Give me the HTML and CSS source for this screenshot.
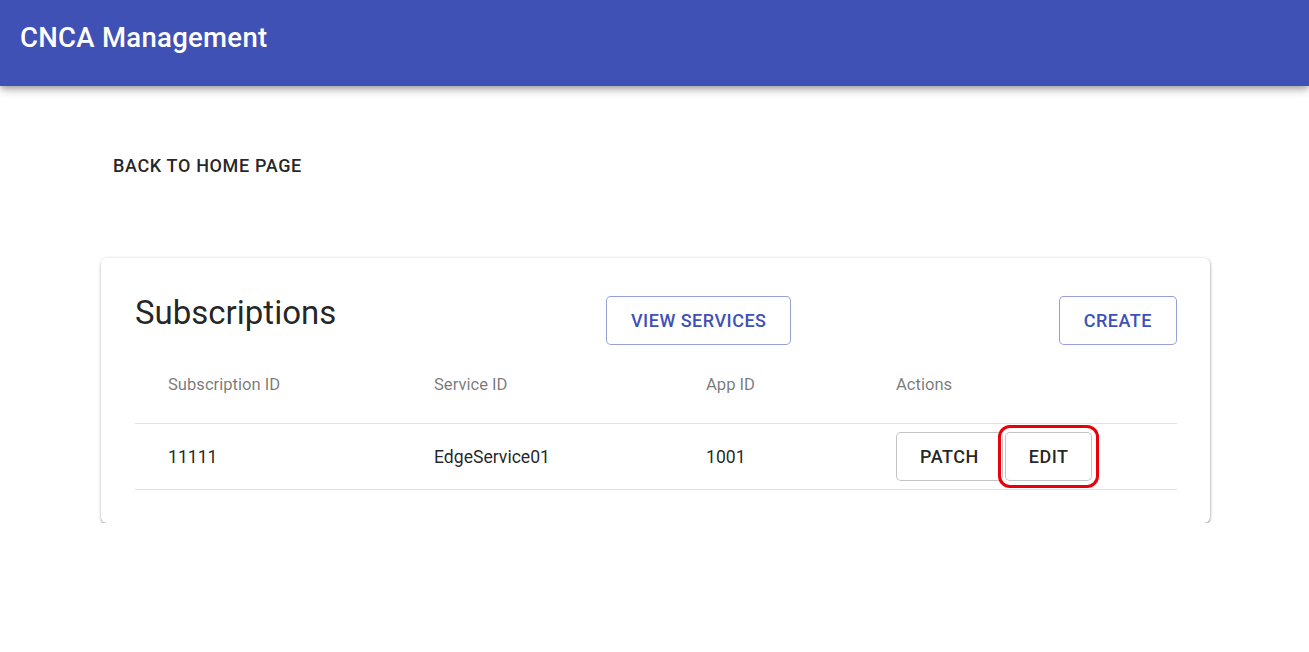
FILE: index.html
```html
<!DOCTYPE html>
<html>
<head>
<meta charset="utf-8">
<link rel="stylesheet" href="styles.css">
</head>
<body>
<header class="appbar">
  <h1 class="app-title">CNCA Management</h1>
</header>
<main class="content">
  <div class="back-row">
    <button class="text-btn">BACK TO HOME PAGE</button>
  </div>
  <section class="card">
    <div class="card-head">
      <h2 class="card-title">Subscriptions</h2>
      <button class="btn btn-primary">VIEW SERVICES</button>
      <div class="spacer"></div>
      <button class="btn btn-primary">CREATE</button>
    </div>
    <div class="table">
      <div class="row row-head">
        <div class="cell">Subscription ID</div>
        <div class="cell">Service ID</div>
        <div class="cell">App ID</div>
        <div class="cell">Actions</div>
      </div>
      <div class="row row-body">
        <div class="cell">11111</div>
        <div class="cell">EdgeService01</div>
        <div class="cell">1001</div>
        <div class="cell actions">
          <button class="btn btn-default">PATCH</button>
          <button class="btn btn-default highlighted">EDIT</button>
        </div>
      </div>
    </div>
  </section>
</main>
</body>
</html>
```

FILE: styles.css
```css
* { box-sizing: border-box; }
html, body { margin: 0; padding: 0; background: #fff; }
body { font-family: Roboto, "Liberation Sans", Arial, sans-serif; color: rgba(0,0,0,0.87); }

.appbar {
  height: 86px;
  background: #3f51b5;
  box-shadow: 0 3px 5px -1px rgba(0,0,0,0.2), 0 5px 8px 0 rgba(0,0,0,0.14), 0 1px 12px 0 rgba(0,0,0,0.12);
  display: flex;
  align-items: flex-start;
  padding: 21px 0 0 20px;
  position: relative;
}
.app-title {
  margin: 0;
  color: #fff;
  font-size: 27.5px;
  font-weight: 500;
  line-height: 34px;
  letter-spacing: 0.3px;
}

.content {
  padding: 0 99px 0 101px;
}
.back-row {
  padding-top: 59px;
  height: 172px;
}
.text-btn {
  font-family: inherit;
  background: none;
  border: 0;
  padding: 6px 12px;
  font-size: 18px;
  font-weight: 500;
  letter-spacing: 0.65px;
  color: rgba(0,0,0,0.87);
  line-height: 30px;
  cursor: pointer;
}

.card {
  background: #fff;
  border-radius: 6px;
  box-shadow: 0 2px 2px 0 rgba(0,0,0,0.22), 0 1px 4px 0 rgba(0,0,0,0.14), 1px 0 2px 0 rgba(0,0,0,0.1);
  padding: 38px 33px 33px 34px;
}
.card-head {
  display: flex;
  align-items: flex-start;
}
.card-title {
  margin: 0;
  flex: 0 0 471px;
  font-size: 33px;
  font-weight: 400;
  line-height: 34px;
  color: rgba(0,0,0,0.87);
}
.spacer { flex: 1; }

.btn {
  font-family: inherit;
  height: 49px;
  padding: 0 24px;
  font-size: 18px;
  font-weight: 500;
  letter-spacing: 0.5px;
  border-radius: 5px;
  background: #fff;
  cursor: pointer;
}
.btn-primary {
  color: #3f51b5;
  border: 1px solid rgba(63,81,181,0.55);
}
.btn-default {
  color: rgba(0,0,0,0.87);
  border: 1px solid rgba(0,0,0,0.23);
  height: 49px;
  padding: 0 23px;
}

.row {
  display: grid;
  grid-template-columns: 266px 272px 190px 1fr;
  border-bottom: 1px solid #e0e0e0;
}
.row-head {
  height: 79px;
  align-items: center;
  color: rgba(0,0,0,0.54);
  font-size: 16.6px;
  font-weight: 400;
}
.row-body {
  height: 66px;
  align-items: center;
  font-size: 17.6px;
}
.cell { padding-left: 33px; }
.actions { display: flex; gap: 2px; align-items: center; }
.highlighted {
  outline: 3px solid #e8000b;
  outline-offset: 4px;
}
```
